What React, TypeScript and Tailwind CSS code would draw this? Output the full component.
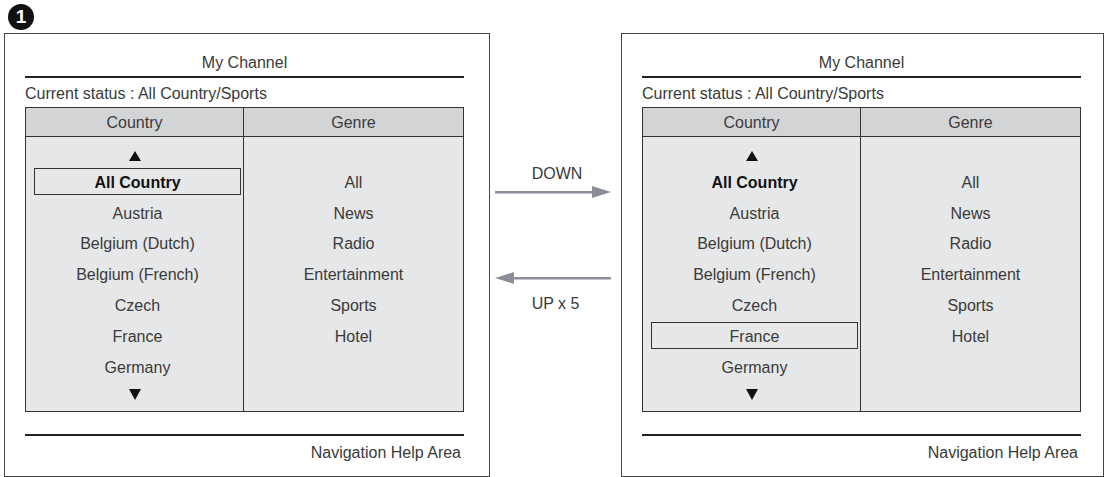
import React from "react";

const countries = ["All Country", "Austria", "Belgium (Dutch)", "Belgium (French)", "Czech", "France", "Germany"];
const genres = ["All", "News", "Radio", "Entertainment", "Sports", "Hotel"];

function Up() {
  return (
    <svg width="12" height="10" viewBox="0 0 12 10" className="block">
      <polygon points="6,0 12,10 0,10" fill="#111" />
    </svg>
  );
}
function Down() {
  return (
    <svg width="12" height="11" viewBox="0 0 12 11" className="block">
      <polygon points="0,0 12,0 6,11" fill="#111" />
    </svg>
  );
}

function Panel({ selected, width }: { selected: number; width: string }) {
  return (
    <div className={`${width} h-[444px] border border-[#444] pl-[20px] flex flex-col text-[16px] text-[#3a3a3a]`}>
      <div className="w-[439px] flex flex-col">
        <div className="pt-[20px] h-[38px] leading-[18px] text-center">My Channel</div>
        <div className="mt-[4px] h-[2px] bg-[#222]" />
        <div className="mt-[5px] pt-[1px] h-[20px] leading-[20px]">Current status : All Country/Sports</div>
        <div className="mt-[4px] border border-[#333] flex flex-col">
          <div className="grid grid-cols-[218px_1fr] h-[29px] bg-[#d3d4d6] border-b border-[#333]">
            <div className="border-r border-[#333] flex items-center justify-center pt-[1px]">Country</div>
            <div className="flex items-center justify-center pt-[1px]">Genre</div>
          </div>
          <div className="grid grid-cols-[218px_1fr] h-[274px] bg-[#e6e7e8]">
            <div className="border-r border-[#333] flex flex-col">
              <div className="h-[30.8px] flex justify-center pt-[14px]">
                <Up />
              </div>
              {countries.map((c, i) => (
                <div key={c} className="h-[30.8px] flex">
                  <div
                    className={`ml-[8px] w-[207px] h-[27px] pt-[2px] leading-[23px] text-center border ${
                      i === selected ? "border-[#333]" : "border-transparent"
                    } ${i === 0 ? "font-bold text-[#111]" : ""}`}
                  >
                    {c}
                  </div>
                </div>
              ))}
              <div className="flex-1 flex justify-center pt-[6px]">
                <Down />
              </div>
            </div>
            <div className="flex flex-col">
              <div className="h-[30.8px]" />
              {genres.map((g) => (
                <div key={g} className="h-[30.8px]">
                  <div className="h-[27px] pt-[2px] leading-[25px] text-center">{g}</div>
                </div>
              ))}
            </div>
          </div>
        </div>
        <div className="mt-[22px] h-[2px] bg-[#222]" />
        <div className="mt-[8px] h-[18px] leading-[18px] text-right pr-[3px]">Navigation Help Area</div>
      </div>
    </div>
  );
}

export default function App() {
  return (
    <div
      className="w-[1108px] h-[477px] bg-white overflow-hidden"
      style={{ fontFamily: '"Liberation Sans", Arial, sans-serif' }}
    >
      <div className="h-[33px] pl-[8px] pt-[4px]">
        <div className="w-[26px] h-[26px] rounded-full bg-[#111] text-white font-bold text-[19px] leading-[26px] text-center">
          1
        </div>
      </div>
      <div className="flex pl-[4px]">
        <Panel selected={0} width="w-[486px]" />
        <div className="w-[131px] flex flex-col pt-[132px] text-[16px] text-[#3a3a3a]">
          <div className="h-[18px] leading-[18px] text-center pl-[3px]">DOWN</div>
          <div className="mt-[3px] ml-[5px]">
            <svg width="116" height="12" viewBox="0 0 116 12" className="block">
              <rect x="0" y="5" width="100" height="2.5" fill="#8a8e99" />
              <polygon points="97,0 116,6 97,12" fill="#8a8e99" />
            </svg>
          </div>
          <div className="mt-[74px] ml-[5px]">
            <svg width="116" height="12" viewBox="0 0 116 12" className="block">
              <rect x="16" y="5" width="100" height="2.5" fill="#8a8e99" />
              <polygon points="19,0 0,6 19,12" fill="#8a8e99" />
            </svg>
          </div>
          <div className="mt-[11px] h-[18px] leading-[18px] text-center">UP x 5</div>
        </div>
        <Panel selected={5} width="w-[483px]" />
      </div>
    </div>
  );
}
